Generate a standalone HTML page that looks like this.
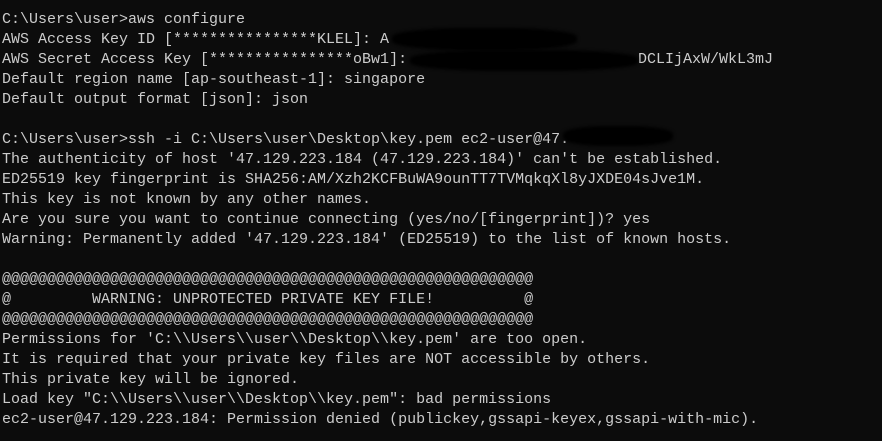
<!DOCTYPE html>
<html><head><style>
html,body{margin:0;padding:0;background:#0c0c0c;width:882px;height:441px;overflow:hidden}
pre{margin:0;padding:10px 0 0 2px;font-family:"Liberation Mono",monospace;font-size:15px;line-height:20px;color:#cccccc;white-space:pre}
.b{position:absolute;border-radius:40%;filter:blur(1.5px)}
.t{position:absolute;font-family:"Liberation Mono",monospace;font-size:15px;line-height:20px;color:#cccccc;white-space:pre}
</style></head><body>
<pre>C:\Users\user>aws configure
AWS Access Key ID [****************KLEL]: A
AWS Secret Access Key [****************oBw1]:
Default region name [ap-southeast-1]: singapore
Default output format [json]: json

C:\Users\user>ssh -i C:\Users\user\Desktop\key.pem ec2-user@47.
The authenticity of host '47.129.223.184 (47.129.223.184)' can't be established.
ED25519 key fingerprint is SHA256:AM/Xzh2KCFBuWA9ounTT7TVMqkqXl8yJXDE04sJve1M.
This key is not known by any other names.
Are you sure you want to continue connecting (yes/no/[fingerprint])? yes
Warning: Permanently added '47.129.223.184' (ED25519) to the list of known hosts.

@@@@@@@@@@@@@@@@@@@@@@@@@@@@@@@@@@@@@@@@@@@@@@@@@@@@@@@@@@@
@         WARNING: UNPROTECTED PRIVATE KEY FILE!          @
@@@@@@@@@@@@@@@@@@@@@@@@@@@@@@@@@@@@@@@@@@@@@@@@@@@@@@@@@@@
Permissions for 'C:\\Users\\user\\Desktop\\key.pem' are too open.
It is required that your private key files are NOT accessible by others.
This private key will be ignored.
Load key "C:\\Users\\user\\Desktop\\key.pem": bad permissions
ec2-user@47.129.223.184: Permission denied (publickey,gssapi-keyex,gssapi-with-mic).</pre>
<div class="t" style="left:638px;top:50px">DCLIjAxW/WkL3mJ</div>
<div class="b" style="left:392px;top:28px;width:185px;height:22px;background:#000"></div>
<div class="b" style="left:410px;top:50px;width:228px;height:21px;background:#000"></div>
<div class="b" style="left:563px;top:126px;width:110px;height:20px;background:#000"></div>
</body></html>
